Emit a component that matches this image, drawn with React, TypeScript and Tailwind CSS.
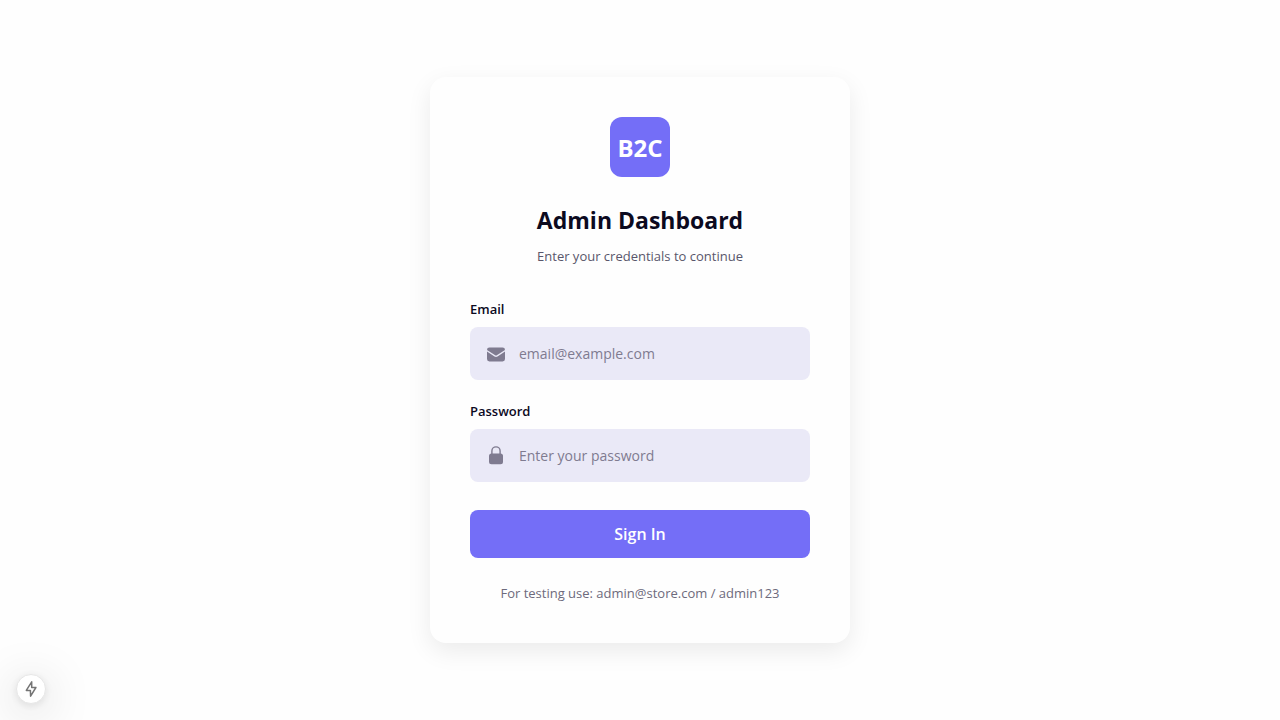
import type { ReactNode } from "react";

type FieldProps = {
  id: string;
  label: string;
  type: string;
  placeholder: string;
  icon: ReactNode;
};

function MailIcon() {
  return (
    <svg viewBox="0 0 20 20" className="size-5 shrink-0" fill="currentColor" aria-hidden="true">
      <path d="M1 6V5.9A2.4 2.4 0 0 1 3.4 3.5h13.2A2.4 2.4 0 0 1 19 5.9V6l-8.2 5.2a1.5 1.5 0 0 1-1.6 0Z" />
      <path d="M1 7.6v7.5a2.4 2.4 0 0 0 2.4 2.4h13.2a2.4 2.4 0 0 0 2.4-2.4V7.6l-7.5 4.8a2.8 2.8 0 0 1-3 0Z" />
    </svg>
  );
}

function LockIcon() {
  return (
    <svg viewBox="0 0 20 20" className="size-5 shrink-0" fill="currentColor" aria-hidden="true">
      <path d="M5.9 9V5a4.1 4.1 0 0 1 8.2 0V9" fill="none" stroke="currentColor" strokeWidth="1.4" />
      <rect x="3" y="7.5" width="14" height="10.8" rx="2.5" />
    </svg>
  );
}

function Field({ id, label, type, placeholder, icon }: FieldProps) {
  return (
    <div className="flex flex-col gap-2">
      <label htmlFor={id} className="text-[13px] leading-5 font-semibold text-[#0c0a1f]">
        {label}
      </label>
      <div className="flex h-[53px] items-center gap-[13px] rounded-lg bg-[#eae9f7] px-4 text-[#7f7b90]">
        {icon}
        <input
          id={id}
          type={type}
          placeholder={placeholder}
          className="min-w-0 flex-1 bg-transparent text-sm text-[#0c0a1f] outline-none placeholder:text-[#7f7b90]"
        />
      </div>
    </div>
  );
}

export default function App() {
  return (
    <div className="flex min-h-screen items-center justify-center bg-[#fefefe] p-5 font-['Segoe_UI','Open_Sans',sans-serif]">
      <main className="w-full max-w-[420px] rounded-2xl bg-[#fefefe] p-10 shadow-[0_8px_24px_rgba(0,0,0,0.08)]">
        <header className="flex flex-col items-center">
          <div className="flex size-[60px] items-center justify-center rounded-xl bg-[#746ef7] pt-px text-2xl font-bold text-white">
            B2C
          </div>
          <h1 className="mt-7 text-[23px] leading-[30px] font-bold text-[#0c0a1f]">Admin Dashboard</h1>
          <p className="mt-[9px] text-[13px] leading-6 text-[#59566b]">Enter your credentials to continue</p>
        </header>
        <form className="mt-[31px] flex flex-col gap-[21px]" onSubmit={(e) => e.preventDefault()}>
          <Field id="email" label="Email" type="email" placeholder="email@example.com" icon={<MailIcon />} />
          <Field id="password" label="Password" type="password" placeholder="Enter your password" icon={<LockIcon />} />
          <button type="submit" className="mt-[7px] h-12 rounded-lg bg-[#746ef7] text-base font-semibold text-white">
            Sign In
          </button>
        </form>
        <p className="mt-[25px] text-center text-[13px] leading-5 text-[#6d6a7c]">
          For testing use: admin@store.com / admin123
        </p>
      </main>
      <button
        type="button"
        aria-label="Developer tools"
        className="fixed bottom-4 left-4 flex size-[30px] items-center justify-center rounded-full border border-[#e6e6e6] bg-white text-[#757575] shadow-[0_2px_8px_rgba(0,0,0,0.10),0_8px_48px_rgba(0,0,0,0.22)]"
      >
        <svg viewBox="0 0 18 18" className="size-[18px] shrink-0" fill="none" stroke="currentColor" strokeWidth="1.5" strokeLinejoin="round">
          <path d="M9.7 1.8 4.3 10.4H8.4L8.6 16.2 13.9 7.5H9.7Z" />
        </svg>
      </button>
    </div>
  );
}
